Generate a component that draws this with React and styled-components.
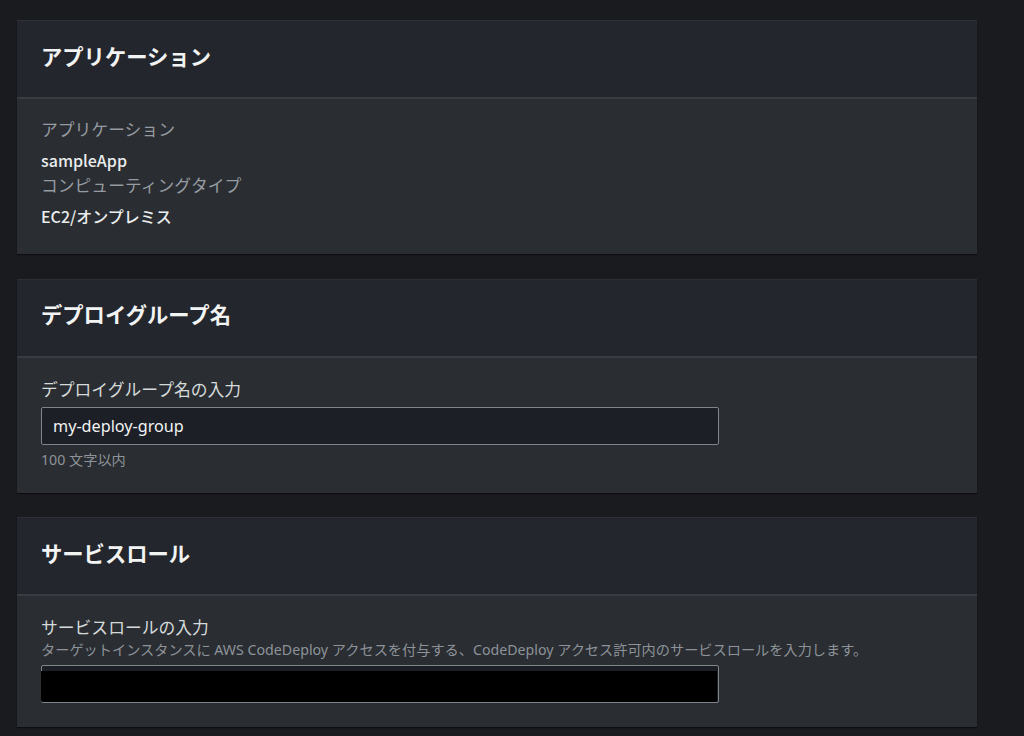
import React from "react";
import styled, { createGlobalStyle } from "styled-components";

const Global = createGlobalStyle`
  html, body {
    margin: 0;
    padding: 0;
    background: #1a1b1f;
  }
  body {
    font-family: "Noto Sans", "Noto Sans CJK JP", sans-serif;
    color: #eaeded;
  }
`;

const Page = styled.div`
  min-height: 736px;
  box-sizing: border-box;
  padding: 20px 47px 0 17px;
  display: flex;
  flex-direction: column;
  gap: 24.5px;
`;

const Card = styled.section`
  background: #2a2d32;
  box-shadow: 0 1px 1px rgba(0, 0, 0, 0.45);
  display: flex;
  flex-direction: column;
`;

const CardHeader = styled.header`
  height: 79px;
  box-sizing: border-box;
  background: #23262d;
  border-top: 1px solid #2c2f35;
  border-bottom: 2px solid #383b41;
  padding: 0 24px 7px;
  display: flex;
  align-items: center;
`;

const Heading = styled.h2`
  margin: 0;
  font-family: "Noto Sans CJK JP", sans-serif;
  font-size: 21.3px;
  font-weight: 700;
  color: #f2f3f3;
  line-height: 30px;
`;

const CardBody = styled.div`
  padding: ${(p) => p.$pad || "17px 24px 26px"};
  display: flex;
  flex-direction: column;
`;

const Label = styled.div`
  font-family: "Noto Sans CJK JP", sans-serif;
  font-size: 16.8px;
  line-height: 26px;
  color: ${(p) => (p.$muted ? "#959ba1" : "#d5dbdb")};
`;

const Value = styled.div`
  font-family: "Noto Sans CJK JP", sans-serif;
  font-size: 16px;
  font-weight: 500;
  line-height: 24px;
  margin-top: ${(p) => p.$gap || 0}px;
  color: #eaeded;
`;

const Description = styled.div`
  font-size: 14.2px;
  line-height: 20px;
  color: #8d9399;
`;

const Hint = styled.div`
  font-size: 14.2px;
  line-height: 20px;
  margin-top: 5px;
  color: #8d9399;
`;

const InputBox = styled.div`
  position: relative;
  margin-top: 5px;
  width: 678px;
  height: 38px;
  box-sizing: border-box;
  background: #1c1f26;
  border: 1px solid #7f868b;
  border-radius: 2px;
  padding: 0 11px;
  display: flex;
  align-items: center;
  font-size: 16.2px;
  color: #f2f3f3;
`;

const Redaction = styled.div`
  position: absolute;
  left: -1px;
  right: 1px;
  top: 5px;
  bottom: 0;
  background: #000;
  border-radius: 0 0 2px 2px;
`;

export default function App() {
  return (
    <>
      <Global />
      <Page>
        <Card>
          <CardHeader>
            <Heading>アプリケーション</Heading>
          </CardHeader>
          <CardBody>
            <Label $muted>アプリケーション</Label>
            <Value $gap={6}>sampleApp</Value>
            <Label $muted>コンピューティングタイプ</Label>
            <Value $gap={6}>EC2/オンプレミス</Value>
          </CardBody>
        </Card>

        <Card>
          <CardHeader>
            <Heading>デプロイグループ名</Heading>
          </CardHeader>
          <CardBody $pad="18px 24px 23px">
            <Label>デプロイグループ名の入力</Label>
            <InputBox>my-deploy-group</InputBox>
            <Hint>100 文字以内</Hint>
          </CardBody>
        </Card>

        <Card>
          <CardHeader>
            <Heading>サービスロール</Heading>
          </CardHeader>
          <CardBody $pad="18px 24px 24px">
            <Label>サービスロールの入力</Label>
            <Description>
              ターゲットインスタンスに AWS CodeDeploy アクセスを付与する、CodeDeploy アクセス許可内のサービスロールを入力します。
            </Description>
            <InputBox>
              <Redaction />
            </InputBox>
          </CardBody>
        </Card>
      </Page>
    </>
  );
}
